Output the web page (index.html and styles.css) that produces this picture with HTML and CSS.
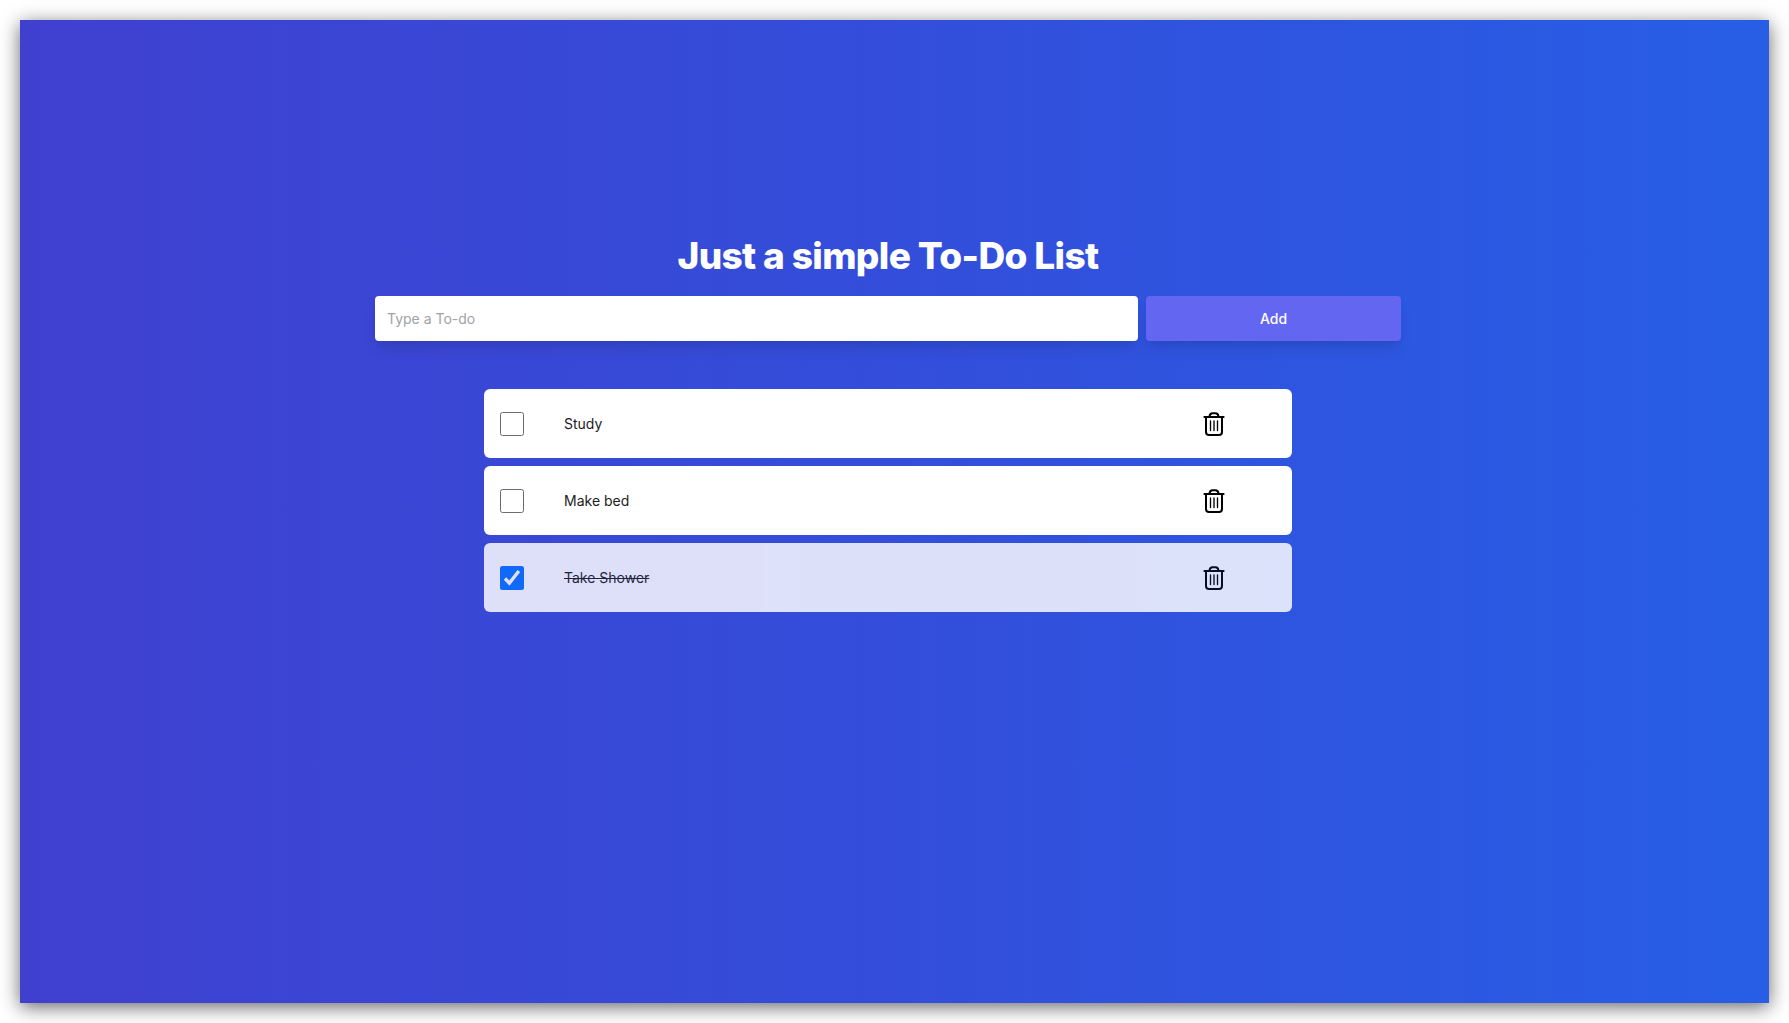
FILE: index.html
```html
<!DOCTYPE html>
<html lang="en">
<head>
<meta charset="utf-8">
<title>To-Do List</title>
<link rel="stylesheet" href="styles.css">
</head>
<body>
<svg width="0" height="0" class="sprite">
  <symbol id="trash" viewBox="0 0 24 24" fill="none" stroke="currentColor" stroke-linecap="round" stroke-linejoin="round">
    <path d="M2.4 4.9h19.2" stroke-width="2"/>
    <path d="M4 5.2v14.7q0 3 3 3h10q3 0 3-3V5.2" stroke-width="2"/>
    <path d="M7.4 4.6q.5-3.4 3.1-3.4h3q2.6 0 3.1 3.4" stroke-width="1.9"/>
    <path d="M8.5 9v9.5M12 9v9.5M15.5 9v9.5" stroke-width="1.35"/>
  </symbol>
</svg>
<main class="window">
  <h1 class="title">Just a simple To-Do List</h1>
  <form class="entry">
    <input class="field" type="text" placeholder="Type a To-do">
    <button class="add" type="button">Add</button>
  </form>
  <ul class="list">
    <li class="item"><span class="check"></span><span class="label">Study</span><svg class="trash"><use href="#trash"/></svg></li>
    <li class="item"><span class="check"></span><span class="label">Make bed</span><svg class="trash"><use href="#trash"/></svg></li>
    <li class="item done"><span class="check"><svg class="tick" viewBox="0 0 24 24"><path d="M5 12.5l4.4 4.6L18.9 5" fill="none" stroke="#fff" stroke-width="3.4"/></svg></span><span class="label">Take Shower</span><svg class="trash"><use href="#trash"/></svg></li>
  </ul>
</main>
</body>
</html>
```
FILE: styles.css
```css
* { box-sizing: border-box; }
body {
  margin: 0;
  height: 1023px;
  padding: 20px;
  background: #fff;
  overflow: hidden;
  font-family: Inter, "Liberation Sans", sans-serif;
}
.sprite { display: none; }
.window {
  height: 983px;
  padding: 210px 13px 0 0;
  display: flex;
  flex-direction: column;
  align-items: center;
  background: linear-gradient(to right, #4040cf, #334edb 50%, #285ee6);
  box-shadow: 0 4px 18px rgba(0, 0, 0, .6);
}
.title {
  margin: 0;
  height: 52px;
  line-height: 52px;
  font-size: 37px;
  font-weight: 800;
  letter-spacing: -.62px;
  color: #fff;
  white-space: nowrap;
}
.entry {
  display: flex;
  gap: 8px;
  width: 1026px;
  margin: 14px 0 48px;
}
.field, .add {
  height: 45px;
  border: 0;
  border-radius: 4px;
  font: 400 14px Inter, "Liberation Sans", sans-serif;
  box-shadow: 0 10px 15px -3px rgba(0, 0, 0, .1), 0 4px 6px -2px rgba(0, 0, 0, .05);
}
.field { width: 763px; padding: 0 12px; }
.field::placeholder { color: #a1a2a6; }
.add { flex: 1; padding: 0; background: #6366f1; color: #fff; font-weight: 500; }
.list {
  display: flex;
  flex-direction: column;
  gap: 8px;
  width: 808px;
  margin: 0;
  padding: 0;
  list-style: none;
}
.item {
  display: flex;
  align-items: center;
  height: 69px;
  padding: 0 66.5px 0 16px;
  border-radius: 6px;
  background: #fff;
  color: #1c1c1c;
  font-size: 14px;
}
.done { opacity: .83; }
.done .label { text-decoration: line-through; }
.check {
  width: 24px;
  height: 24px;
  margin-right: 40px;
  border: 1px solid #6d6d6d;
  border-radius: 2.5px;
}
.done .check { border: 0; background: #0870ff; }
.tick { display: block; width: 24px; height: 24px; }
.trash { width: 24px; height: 24px; margin-left: auto; color: #000; }
```
